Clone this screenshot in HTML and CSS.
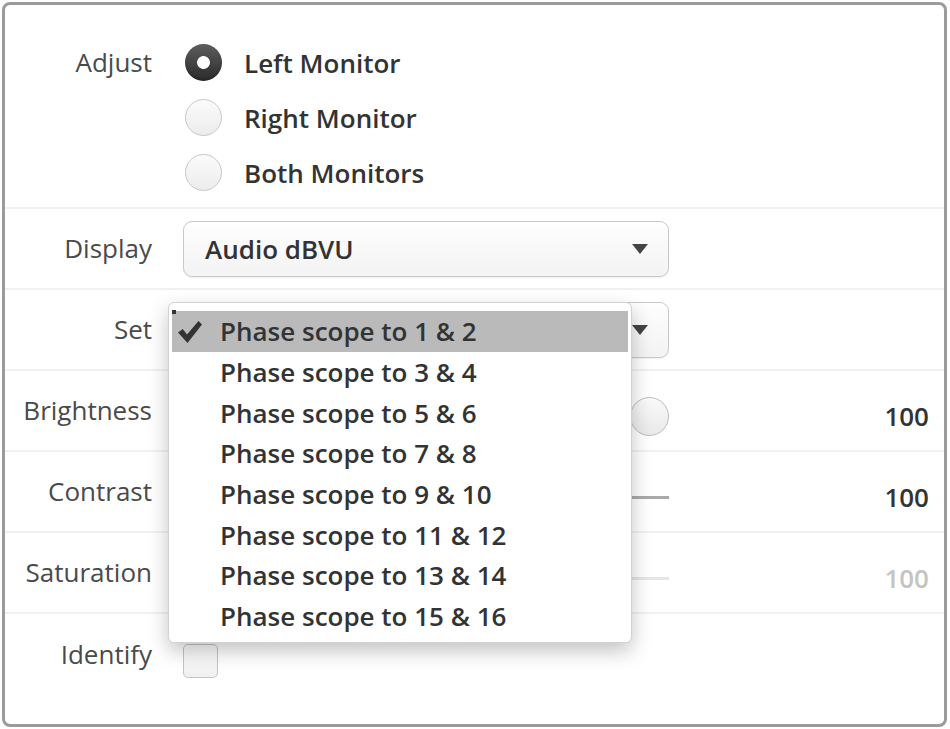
FILE: index.html
```html
<!DOCTYPE html>
<html>
<head>
<meta charset="utf-8">
<link rel="stylesheet" href="styles.css">
</head>
<body>
<div class="frame">
  <div class="row row-adjust">
    <div class="label label-top">Adjust</div>
    <div class="radios">
      <div class="radio-item"><span class="radio radio-on"></span><span class="radio-text">Left Monitor</span></div>
      <div class="radio-item"><span class="radio"></span><span class="radio-text">Right Monitor</span></div>
      <div class="radio-item"><span class="radio"></span><span class="radio-text">Both Monitors</span></div>
    </div>
  </div>
  <div class="row">
    <div class="label">Display</div>
    <div class="select"><span class="select-text">Audio dBVU</span><span class="arrow"></span></div>
  </div>
  <div class="row">
    <div class="label">Set</div>
    <div class="select select-end"><span class="arrow"></span></div>
  </div>
  <div class="row">
    <div class="label">Brightness</div>
    <div class="slider"><div class="track"></div><div class="knob"></div></div>
    <div class="value">100</div>
  </div>
  <div class="row">
    <div class="label">Contrast</div>
    <div class="slider"><div class="track track-dark"></div></div>
    <div class="value">100</div>
  </div>
  <div class="row">
    <div class="label">Saturation</div>
    <div class="slider"><div class="track track-light"></div></div>
    <div class="value value-dim">100</div>
  </div>
  <div class="row row-last">
    <div class="label">Identify</div>
    <div class="checkbox-wrap"><span class="checkbox"></span></div>
  </div>

  <div class="menu">
    <div class="menu-item selected">
      <svg class="check" width="26" height="24" viewBox="0 0 26 24"><path d="M1 12.5 L5.8 9 L10 14.5 L21.5 1 L25 4.5 L10.5 23 Z" fill="#333"/></svg>
      <span>Phase scope to 1 &amp; 2</span>
    </div>
    <div class="menu-item"><span>Phase scope to 3 &amp; 4</span></div>
    <div class="menu-item"><span>Phase scope to 5 &amp; 6</span></div>
    <div class="menu-item"><span>Phase scope to 7 &amp; 8</span></div>
    <div class="menu-item"><span>Phase scope to 9 &amp; 10</span></div>
    <div class="menu-item"><span>Phase scope to 11 &amp; 12</span></div>
    <div class="menu-item"><span>Phase scope to 13 &amp; 14</span></div>
    <div class="menu-item"><span>Phase scope to 15 &amp; 16</span></div>
    <span class="menu-dot"></span>
  </div>
</div>
</body>
</html>
```
FILE: styles.css
```css
* { box-sizing: border-box; }
html, body { margin: 0; padding: 0; background: #fff; }
body {
  font-family: "Open Sans", "Liberation Sans", sans-serif;
  width: 950px;
  height: 729px;
  padding: 2px 3px 2px 2px;
}
.frame {
  position: relative;
  width: 945px;
  height: 725px;
  border: 3px solid #9b9b9b;
  border-radius: 8px;
  background: #fff;
  overflow: hidden;
}
.row {
  display: grid;
  grid-template-columns: 147px 486px 1fr;
  column-gap: 31px;
  align-items: center;
  height: 81px;
  border-bottom: 2px solid #f1f1f1;
  padding-right: 15px;
}
.row-adjust {
  height: 204px;
  align-items: start;
  padding-top: 30px;
}
.row-last { border-bottom: none; }
.label {
  text-align: right;
  font-size: 26px;
  color: #4a4a4a;
  font-weight: 400;
  margin-top: -2px;
}
.label-top { line-height: 55px; margin-top: 0; }
.radios { display: flex; flex-direction: column; margin-left: 2px; }
.radio-item {
  display: flex;
  align-items: center;
  height: 55px;
  gap: 22px;
}
.radio {
  width: 37px;
  height: 37px;
  border-radius: 50%;
  border: 1.5px solid #c8c8c8;
  background: linear-gradient(#fbfbfb, #ececec);
  flex: none;
}
.radio-on {
  border: none;
  background: radial-gradient(circle at 50% 50%, #fff 0 6px, transparent 6.8px), linear-gradient(#5e5e5e, #2a2a2a);
  box-shadow: inset 0 -1px 2px rgba(0,0,0,0.3);
}
.radio-text {
  font-size: 26px;
  font-weight: 600;
  color: #333;
}
.select {
  height: 56px;
  border: 1.5px solid #c9c9c9;
  border-radius: 9px;
  background: linear-gradient(#fefefe, #f3f3f3);
  box-shadow: 0 1px 1px rgba(0,0,0,0.06);
  display: flex;
  align-items: center;
  justify-content: space-between;
  padding: 0 20px 0 21px;
}
.select-end { justify-content: flex-end; }
.select-text {
  font-size: 26px;
  font-weight: 600;
  color: #333;
}
.arrow {
  width: 0;
  height: 0;
  border-left: 8px solid transparent;
  border-right: 8px solid transparent;
  border-top: 10px solid #444;
}
.slider {
  position: relative;
  height: 40px;
  display: flex;
  align-items: center;
  margin-top: 12px;
}
.track {
  width: 100%;
  height: 3px;
  background: #d6d6d6;
}
.track-dark { background: #aaa; }
.track-light { background: #e6e6e6; }
.knob {
  position: absolute;
  right: 0;
  top: 0;
  width: 39px;
  height: 39px;
  border-radius: 50%;
  border: 1.5px solid #bdbdbd;
  background: linear-gradient(#fafafa, #e9e9e9);
}
.value {
  text-align: right;
  font-size: 26px;
  font-weight: 600;
  color: #333;
  padding-top: 10px;
}
.value-dim { color: #c4c4c4; }
.checkbox-wrap { display: flex; }
.checkbox {
  width: 35px;
  height: 34px;
  border: 1.5px solid #c4c4c4;
  border-radius: 5px;
  background: linear-gradient(#fdfdfd, #f0f0f0);
  margin-top: 12px;
}
.menu {
  position: absolute;
  left: 163px;
  top: 297px;
  width: 464px;
  height: 341px;
  background: #fff;
  border: 1px solid #d2d2d2;
  border-radius: 6px;
  box-shadow: 0 8px 20px rgba(0,0,0,0.24);
  padding: 8px 3px 7px 3px;
}
.menu-item {
  position: relative;
  height: 40.7px;
  display: flex;
  align-items: center;
  padding-left: 48px;
  font-size: 26px;
  font-weight: 600;
  color: #333;
}
.menu-item.selected { background: #bababa; }
.check { position: absolute; left: 5px; top: 9px; }
.menu-dot {
  position: absolute;
  left: 3px;
  top: 7px;
  width: 4px;
  height: 4px;
  background: #333;
}
```
